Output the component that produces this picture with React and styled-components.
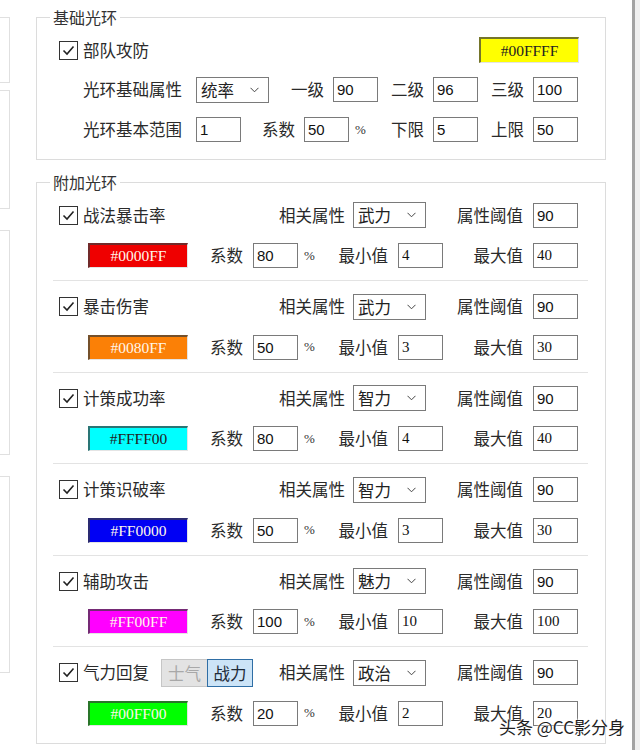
import React from 'react';
import styled, { createGlobalStyle, css } from 'styled-components';

const GlobalStyle = createGlobalStyle`
  html, body {
    margin: 0;
    padding: 0;
    background: #fff;
  }
  body {
    font-family: "Noto Sans CJK SC", "Liberation Sans", sans-serif;
    color: #222;
  }
`;

const CJK = `"Noto Sans CJK SC", "Liberation Sans", sans-serif`;
const SERIF = `"Liberation Serif", "Noto Sans CJK SC", serif`;

const Screen = styled.div`
  position: relative;
  display: flex;
  width: 640px;
  height: 750px;
  overflow: hidden;
  background: #fff;
`;

const LeftStrip = styled.div`
  width: 10px;
  flex-shrink: 0;
  display: flex;
  flex-direction: column;
`;

const StubPanel = styled.div`
  box-sizing: border-box;
  height: ${props => props.$h}px;
  margin-top: ${props => props.$mt}px;
  border: 1px solid #e0e0e0;
  border-left: none;
`;

const Main = styled.div`
  flex: 1;
  padding: 7px 26px 0 26px;
  min-width: 0;
`;

const ScrollEdge = styled.div`
  width: 8px;
  flex-shrink: 0;
  box-sizing: border-box;
  border-left: 3px solid #a3a3a3;
  background: #f0f0f0;
`;

const Group = styled.fieldset`
  margin: ${props => props.$mt || 0}px 0 0 0;
  padding: 0 17px ${props => props.$pb}px 16px;
  border: 1px solid #dcdcdc;
  min-width: 0;
`;

const Legend = styled.legend`
  margin-left: -3px;
  padding: 0 3px;
  font-family: ${CJK};
  font-size: 16px;
  line-height: 20px;
  color: #333;
`;

const GroupBody = styled.div`
  padding-top: ${props => props.$pt}px;
`;

const Row = styled.div`
  display: flex;
  align-items: center;
  height: ${props => props.$h || 25}px;
  margin-top: ${props => props.$mt || 0}px;
  padding-left: ${props => props.$pl || 0}px;
`;

const Lead = styled.div`
  display: flex;
  align-items: center;
  width: ${props => props.$w}px;
  flex-shrink: 0;
  padding-left: 6px;
  box-sizing: border-box;
`;

const Label = styled.span`
  display: block;
  flex-shrink: 0;
  box-sizing: border-box;
  width: ${props => props.$w ? `${props.$w}px` : 'auto'};
  padding-right: ${props => props.$pr || 0}px;
  text-align: ${props => props.$right ? 'right' : 'left'};
  font-family: ${CJK};
  font-size: 16.5px;
  line-height: 25px;
  color: #2a2a2a;
  white-space: nowrap;
`;

const Pct = styled.span`
  display: block;
  flex-shrink: 0;
  width: 22px;
  padding-left: 6px;
  box-sizing: border-box;
  font-family: ${SERIF};
  font-size: 13px;
  color: #333;
`;

const Field = styled.input`
  box-sizing: border-box;
  width: 45px;
  height: 25px;
  margin: 0;
  padding: 0 3px;
  flex-shrink: 0;
  border: 1px solid #7a7a7a;
  background: #fff;
  color: #111;
  font-family: ${props => props.$serif ? SERIF : `"Liberation Sans", sans-serif`};
  font-size: 15px;
  outline: none;
`;

const SelectBox = styled.div`
  box-sizing: border-box;
  display: flex;
  align-items: center;
  justify-content: space-between;
  width: 73px;
  height: 26px;
  flex-shrink: 0;
  padding: 0 9px 0 4px;
  border: 1px solid #7a7a7a;
  background: #fff;
  font-family: ${CJK};
  font-size: 16.5px;
  color: #222;
`;

const CheckBox = styled.div`
  box-sizing: border-box;
  width: 19px;
  height: 19px;
  flex-shrink: 0;
  margin-right: 5px;
  border: 1px solid #333;
  background: #fff;
  display: flex;
  align-items: center;
  justify-content: center;
`;

const Swatch = styled.div`
  box-sizing: border-box;
  display: flex;
  align-items: center;
  justify-content: center;
  width: 100px;
  height: ${props => props.$h || 25}px;
  flex-shrink: 0;
  margin-left: ${props => props.$auto ? 'auto' : '0'};
  margin-right: ${props => props.$mr || 0}px;
  background: ${props => props.$bg};
  border-top: 2px solid rgba(60, 60, 60, 0.7);
  border-left: 2px solid rgba(60, 60, 60, 0.7);
  border-right: 1px solid #e4e4e4;
  border-bottom: 1px solid #e4e4e4;
  color: ${props => props.$dark ? '#222' : '#fff6ea'};
  font-family: ${SERIF};
  font-size: 15.5px;
`;

const Separator = styled.div`
  height: 1px;
  margin: 12px 0 12.5px;
  background: #e3e3e3;
`;

const Toggle = styled.div`
  display: flex;
  margin-left: 12px;
  height: 28px;
`;

const ToggleBtn = styled.div`
  box-sizing: border-box;
  display: flex;
  align-items: center;
  justify-content: center;
  width: 46px;
  height: 28px;
  font-family: ${CJK};
  font-size: 16.5px;
  ${props => props.$active ? css`
    background: #cce4f7;
    border: 1px solid #2f6ea5;
    color: #1d2a38;
  ` : css`
    background: #e3e3e3;
    border: 1px solid #c6c6c6;
    border-right: none;
    color: #a8a8a8;
  `}
`;

const Watermark = styled.div`
  position: absolute;
  right: 15px;
  top: 716px;
  font-family: ${CJK};
  font-size: 17px;
  line-height: 22px;
  color: #1e1e1e;
  text-shadow: 0 0 2px #fff, 0 0 3px #fff;
  white-space: nowrap;
`;

const Check = () => (
  <CheckBox>
    <svg width="15" height="15" viewBox="0 0 15 15">
      <path d="M2.5 7.5 L6 11 L12.5 3.5" fill="none" stroke="#222" strokeWidth="1.6" />
    </svg>
  </CheckBox>
);

const Select = ({ value }) => (
  <SelectBox>
    <span>{value}</span>
    <svg width="9" height="6" viewBox="0 0 9 6">
      <path d="M0.5 0.8 L4.5 4.8 L8.5 0.8" fill="none" stroke="#444" strokeWidth="1" />
    </svg>
  </SelectBox>
);

const auras = [
  { name: '战法暴击率', attr: '武力', threshold: '90', color: '#ef0000', hex: '#0000FF', coef: '80', min: '4', max: '40' },
  { name: '暴击伤害', attr: '武力', threshold: '90', color: '#fb8006', hex: '#0080FF', coef: '50', min: '3', max: '30' },
  { name: '计策成功率', attr: '智力', threshold: '90', color: '#00ffff', hex: '#FFFF00', coef: '80', min: '4', max: '40', dark: true },
  { name: '计策识破率', attr: '智力', threshold: '90', color: '#0000f4', hex: '#FF0000', coef: '50', min: '3', max: '30' },
  { name: '辅助攻击', attr: '魅力', threshold: '90', color: '#ff00ff', hex: '#FF00FF', coef: '100', min: '10', max: '100' },
  { name: '气力回复', attr: '政治', threshold: '90', color: '#00ff00', hex: '#00FF00', coef: '20', min: '2', max: '20', toggle: true },
];

const AuraSection = ({ aura, last }) => (
  <>
    <Row $h={26}>
      <Lead $w={216}>
        <Check />
        <Label>{aura.name}</Label>
        {aura.toggle && (
          <Toggle>
            <ToggleBtn>士气</ToggleBtn>
            <ToggleBtn $active>战力</ToggleBtn>
          </Toggle>
        )}
      </Lead>
      <Label $w={84} $pr={8} $right>相关属性</Label>
      <Select value={aura.attr} />
      <Label $w={107} $pr={10} $right>属性阈值</Label>
      <Field readOnly value={aura.threshold} />
    </Row>
    <Row $mt={15} $pl={35}>
      <Swatch $bg={aura.color} $dark={aura.dark}>{aura.hex}</Swatch>
      <Label $w={65} $pr={10} $right>系数</Label>
      <Field readOnly value={aura.coef} />
      <Pct>%</Pct>
      <Label $w={78} $pr={10} $right>最小值</Label>
      <Field readOnly $serif value={aura.min} />
      <Label $w={90} $pr={10} $right>最大值</Label>
      <Field readOnly $serif value={aura.max} />
    </Row>
    {!last && <Separator />}
  </>
);

export default function App() {
  return (
    <Screen>
      <GlobalStyle />
      <LeftStrip>
        <StubPanel $mt={17} $h={66} />
        <StubPanel $mt={7} $h={119} />
        <StubPanel $mt={21} $h={225} />
        <StubPanel $mt={21} $h={197} />
      </LeftStrip>

      <Main>
        <Group $pb={17}>
          <Legend>基础光环</Legend>
          <GroupBody $pt={10}>
            <Row $h={26} $pl={6}>
              <Check />
              <Label>部队攻防</Label>
              <Swatch $h={26} $bg="#ffff00" $dark $auto $mr={9}>#00FFFF</Swatch>
            </Row>
            <Row $mt={14} $pl={30}>
              <Label $w={113}>光环基础属性</Label>
              <Select value="统率" />
              <Label $w={64} $pr={9} $right>一级</Label>
              <Field readOnly value="90" />
              <Label $w={55} $pr={9} $right>二级</Label>
              <Field readOnly value="96" />
              <Label $w={55} $pr={9} $right>三级</Label>
              <Field readOnly value="100" />
            </Row>
            <Row $mt={15} $pl={30}>
              <Label $w={113}>光环基本范围</Label>
              <Field readOnly value="1" />
              <Label $w={63} $pr={9} $right>系数</Label>
              <Field readOnly value="50" />
              <Pct>%</Pct>
              <Label $w={62} $pr={9} $right>下限</Label>
              <Field readOnly value="5" />
              <Label $w={55} $pr={9} $right>上限</Label>
              <Field readOnly value="50" />
            </Row>
          </GroupBody>
        </Group>

        <Group $mt={12} $pb={17}>
          <Legend>附加光环</Legend>
          <GroupBody $pt={10}>
            {auras.map((aura, i) => (
              <AuraSection key={aura.name} aura={aura} last={i === auras.length - 1} />
            ))}
          </GroupBody>
        </Group>
      </Main>

      <ScrollEdge />
      <Watermark>头条 @CC影分身</Watermark>
    </Screen>
  );
}
